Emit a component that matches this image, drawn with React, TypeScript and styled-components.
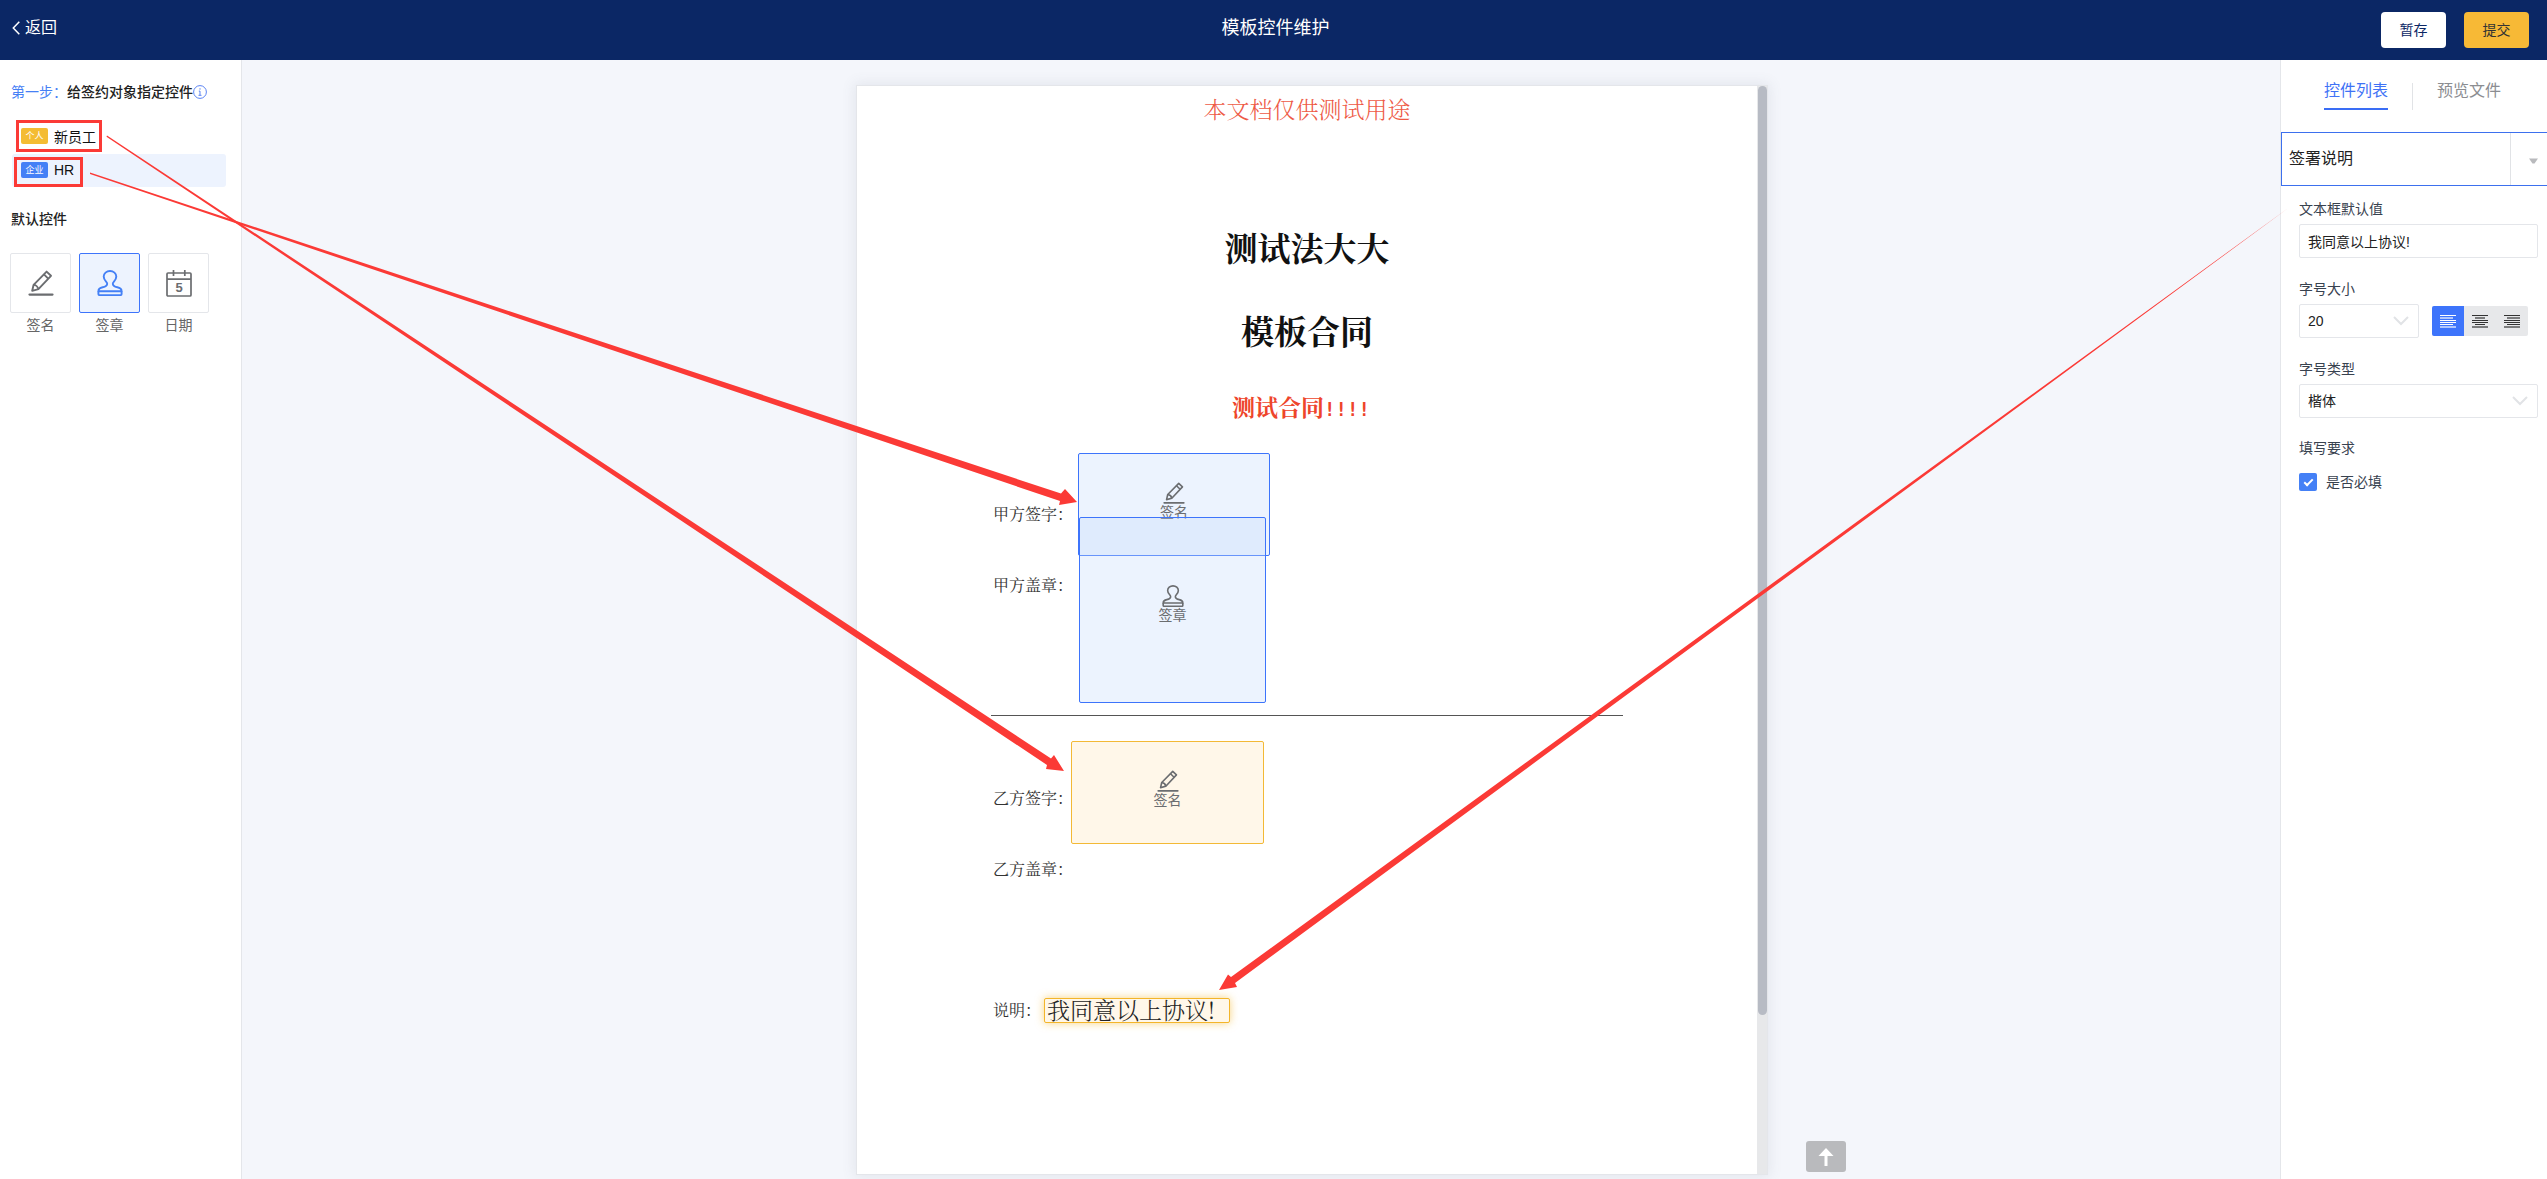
import React, { useState } from "react";
import styled, { createGlobalStyle, css } from "styled-components";

const sans = `"Noto Sans CJK SC", "Liberation Sans", sans-serif`;
const latin = `"Liberation Sans", "Noto Sans CJK SC", sans-serif`;
const serif = `"Noto Serif CJK SC", "Noto Sans CJK SC", serif`;

const GlobalStyle = createGlobalStyle`
  *, *::before, *::after { box-sizing: border-box; }
  body { margin: 0; font-family: ${latin}; font-size: 14px; color: #222; background: #f4f6fb; }
  button, input, select { font: inherit; color: inherit; }
  button { cursor: pointer; }
`;

const App = styled.div`
  position: relative;
  display: flex;
  flex-direction: column;
  height: 100vh;
  overflow: hidden;
`;

/* ---------- header ---------- */
const Header = styled.header`
  flex: none;
  display: grid;
  grid-template-columns: 1fr auto 1fr;
  align-items: center;
  height: 60px;
  padding: 0 18px 0 12px;
  background: #0b2765;
  color: #fff;
`;

const BackLink = styled.a`
  display: flex;
  align-items: center;
  gap: 5px;
  justify-self: start;
  padding-bottom: 4px;
  color: #fff;
  font-size: 16px;
  line-height: 24px;
  text-decoration: none;
`;

const PageTitle = styled.h1`
  margin: 0;
  padding: 0 0 4px 10px;
  font-size: 18px;
  font-weight: 400;
  line-height: 24px;
`;

const HeaderActions = styled.div`
  display: flex;
  justify-content: flex-end;
  gap: 18px;
`;

const ActionButton = styled.button<{ $primary?: boolean }>`
  width: 65px;
  height: 36px;
  padding: 0 0 2px;
  border: 0;
  border-radius: 4px;
  background: ${(p) => (p.$primary ? "#f7b936" : "#fff")};
  color: ${(p) => (p.$primary ? "#333" : "#0b2765")};
`;

/* ---------- body ---------- */
const Body = styled.div`
  flex: 1;
  min-height: 0;
  display: grid;
  grid-template-columns: 242px minmax(0, 1fr) 267px;
`;

const Sidebar = styled.aside`
  padding: 20px 15px 0 11px;
  background: #fff;
  border-right: 1px solid #e4e6ea;
`;

const StepTitle = styled.h2`
  display: flex;
  align-items: center;
  margin: 0 0 16px;
  font-size: 14px;
  font-weight: 500;
  line-height: 24px;
  white-space: nowrap;
  color: #222;
`;

const StepNumber = styled.span`
  font-weight: 400;
  color: #4680f5;
`;

const SignerList = styled.ul`
  display: grid;
  gap: 1px;
  margin: 0;
  padding: 0 0 0 1px;
  list-style: none;
`;

const Signer = styled.button<{ $active?: boolean }>`
  display: flex;
  align-items: center;
  gap: 6px;
  width: 100%;
  height: 33px;
  padding: 0 9px 1px;
  border: 0;
  border-radius: 3px;
  background: ${(p) => (p.$active ? "#edf3fe" : "transparent")};
  color: #111;
`;

const Badge = styled.span<{ $color: string }>`
  width: 27px;
  border-radius: 2px;
  background: ${(p) => p.$color};
  color: #fff;
  font-size: 9px;
  line-height: 16px;
  text-align: center;
`;

const SectionTitle = styled.h2`
  margin: 20px 0 22px;
  font-size: 14px;
  font-weight: 500;
  line-height: 24px;
`;

const Tiles = styled.div`
  display: flex;
  gap: 8px;
  margin-left: -1px;
`;

const Tile = styled.button`
  display: grid;
  justify-items: center;
  width: 61px;
  padding: 0;
  border: 0;
  background: none;
  color: #666;
  line-height: 24px;
`;

const TileIcon = styled.span<{ $active?: boolean }>`
  display: grid;
  place-items: center;
  width: 100%;
  height: 60px;
  border: 1px solid ${(p) => (p.$active ? "#3d74fb" : "#e4e6ea")};
  border-radius: 2px;
  background: ${(p) => (p.$active ? "#edf3fe" : "#fff")};
  color: ${(p) => (p.$active ? "#4480f6" : "#6b6d70")};
`;

/* ---------- document ---------- */
const Workspace = styled.main`
  position: relative;
  display: flex;
  justify-content: center;
  padding: 25px 0 4px 102px;
  min-height: 0;
`;

const Viewer = styled.div`
  display: flex;
  width: 912px;
  border: 1px solid #e4e6ea;
  background: #e7e8ea;
  box-shadow: 0 0 12px 2px rgba(90, 100, 120, 0.1);
`;

const Sheet = styled.article`
  position: relative;
  flex: 1;
  padding: 0 134px;
  background: #fff;
  font-family: ${serif};
  color: #333;
  overflow: hidden;
`;

const ScrollTrack = styled.div`
  width: 10px;
  padding-left: 1px;
`;

const ScrollThumb = styled.div`
  height: 85.4%;
  border-radius: 5px;
  background: #b7bbc4;
`;

const TestNotice = styled.p`
  margin: 0 0 73px;
  font-size: 23px;
  line-height: 46px;
  font-weight: 300;
  text-align: center;
  color: #ee5a46;
`;

const DocTitle = styled.h2`
  margin: 0;
  font-size: 33px;
  font-weight: 700;
  line-height: 83px;
  text-align: center;
  color: #111;
`;

const DocSubtitle = styled.p`
  height: 72px;
  margin: 0 0 35px;
  padding-right: 12px;
  font-size: 23px;
  font-weight: 700;
  line-height: 72px;
  text-align: center;
  color: #ee452b;
`;

const Marks = styled.span`
  font-family: "DejaVu Sans Mono", monospace;
  font-size: 19px;
  line-height: 1;
`;

const DocLine = styled.p`
  margin: 0;
  padding-left: 2px;
  font-size: 16px;
  line-height: 71px;
`;

const DocRule = styled.hr`
  height: 1px;
  margin: 95px 0 46px;
  border: 0;
  background: #555;
`;

const PartyBlock = styled.section<{ $last?: boolean }>`
  ${(p) => p.$last && css`margin-top: 70px;`}
`;

type Box = { x: number; y: number; w: number; h: number; pad: number };

const Control = styled.div<{ $box: Box; $tone: "blue" | "amber" }>`
  position: absolute;
  left: ${(p) => p.$box.x}px;
  top: ${(p) => p.$box.y}px;
  width: ${(p) => p.$box.w}px;
  height: ${(p) => p.$box.h}px;
  display: flex;
  flex-direction: column;
  align-items: center;
  padding-top: ${(p) => p.$box.pad}px;
  border: 1px solid ${(p) => (p.$tone === "blue" ? "#3d74fb" : "#f3b936")};
  border-radius: 2px;
  background: ${(p) => (p.$tone === "blue" ? "rgba(196, 218, 252, 0.32)" : "#fff7e9")};
  font-family: ${sans};
  line-height: 14px;
  color: #6b6d70;
`;

const TextControl = styled.div`
  position: absolute;
  left: 187px;
  top: 912px;
  width: 186px;
  height: 25px;
  padding-left: 2px;
  border: 1px solid #f3b52a;
  border-radius: 2px;
  background: #fff7e9;
  box-shadow: 0 0 8px rgba(243, 181, 42, 0.6);
  font-size: 23px;
  font-weight: 300;
  line-height: 21px;
  white-space: nowrap;
  color: #222;
`;

const BackToTop = styled.button`
  position: absolute;
  left: calc(50% + 545px);
  bottom: 7px;
  display: grid;
  place-items: center;
  width: 40px;
  height: 31px;
  padding: 0;
  border: 0;
  border-radius: 3px;
  background: #b9babd;
`;

/* ---------- right panel ---------- */
const Panel = styled.aside`
  background: #fff;
  border-left: 1px solid #e4e6ea;
`;

const Tabs = styled.nav`
  display: flex;
  align-items: flex-start;
  gap: 24px;
  padding: 19px 0 22px 43px;
`;

const Tab = styled.button<{ $active?: boolean }>`
  height: 31px;
  padding: 0 0 5px;
  border: 0;
  border-bottom: 2px solid ${(p) => (p.$active ? "#3a6df5" : "transparent")};
  background: none;
  font-size: 16px;
  line-height: 24px;
  color: ${(p) => (p.$active ? "#3f72f6" : "#8b8d91")};
`;

const TabDivider = styled.span`
  width: 1px;
  height: 27px;
  margin-top: 4px;
  background: #e1e3e6;
`;

const FieldHeader = styled.div`
  display: flex;
  height: 54px;
  border: 1px solid #3d70ee;
  border-right: 0;
`;

const FieldName = styled.h3`
  flex: 1;
  margin: 0;
  padding-left: 7px;
  font-size: 16px;
  font-weight: 400;
  line-height: 52px;
`;

const FieldToggle = styled.button`
  width: 37px;
  padding: 0 0 0 8px;
  border: 0;
  border-left: 1px solid #e1e3e6;
  background: none;
`;

const Form = styled.form`
  display: grid;
  padding: 8px 9px 0 18px;
`;

const Field = styled.div`
  margin-bottom: 16px;
`;

const Label = styled.label`
  display: block;
  line-height: 30px;
  color: #38424f;
`;

const Caption = styled.div`
  line-height: 28px;
  color: #38424f;
`;

const inputBox = css`
  display: block;
  width: 100%;
  height: 34px;
  padding: 0 8px 1px;
  border: 1px solid #e4e6ea;
  border-radius: 2px;
  background: #fff;
  color: #222;
  appearance: none;
  outline: none;
`;

const TextInput = styled.input`
  ${inputBox}
`;

const SelectWrap = styled.div<{ $short?: boolean }>`
  position: relative;
  ${(p) => p.$short && css`flex: 0 0 120px;`}
`;

const SelectInput = styled.select`
  ${inputBox}
`;

const Chevron = styled.svg`
  position: absolute;
  right: 10px;
  top: 12px;
  pointer-events: none;
`;

const Row = styled.div`
  display: flex;
  align-items: center;
  gap: 13px;
`;

const AlignGroup = styled.div`
  display: flex;
  overflow: hidden;
  border-radius: 2px;
  background: #e7e8ea;
`;

const AlignButton = styled.button<{ $active?: boolean }>`
  display: grid;
  place-items: center;
  width: 32px;
  height: 30px;
  padding: 0;
  border: 0;
  background: ${(p) => (p.$active ? "#3d74fb" : "transparent")};
  color: ${(p) => (p.$active ? "#fff" : "#333")};
`;

const CheckLabel = styled.label`
  display: flex;
  align-items: center;
  gap: 9px;
  margin-top: 8px;
  line-height: 24px;
  color: #38424f;
`;

const Check = styled.input`
  display: grid;
  place-items: center;
  width: 18px;
  height: 18px;
  margin: 0;
  border-radius: 2px;
  appearance: none;
  background: #4480f6;

  &::after {
    content: "";
    width: 9px;
    height: 5px;
    margin-bottom: 2px;
    border: solid #fff;
    border-width: 0 0 2px 2px;
    transform: rotate(-45deg);
  }
  &:not(:checked)::after { display: none; }
`;

/* ---------- annotations ---------- */
const Annotations = styled.svg`
  position: absolute;
  left: 0;
  top: 0;
  width: 100%;
  height: 100%;
  pointer-events: none;
`;

/* ---------- icons ---------- */
const PenIcon = ({ size = 26 }: { size?: number }) => (
  <svg width={size} height={size} viewBox="0 0 26 26" fill="none" stroke="currentColor" strokeWidth="1.9" strokeLinejoin="round" aria-hidden="true">
    <path d="M4.200 20.800 5.600 14.800 18.600 1.600 23 5.800 10.400 19.200Z" />
    <path d="m16 4.400 4.200 4.200M5.600 14.800c2 .2 4.400 2 4.800 4.400" />
    <path d="M1.500 24.600h23" strokeWidth="2.200" strokeLinecap="round" />
  </svg>
);

const StampIcon = ({ size = 26 }: { size?: number }) => (
  <svg width={size} height={size} viewBox="0 0 26 26" fill="none" stroke="currentColor" strokeWidth="1.900" strokeLinejoin="round" aria-hidden="true">
    <path d="M10.200 13.800c.2-2.200-3.500-3.200-3.500-7.300a6.300 5.500 0 0 1 12.600 0c0 4.100-3.700 5.100-3.500 7.300 0 2.400 2 3 4.500 3.500 3.200.6 4.300 1.600 4.300 3.900H1.400c0-2.300 1.100-3.300 4.300-3.900 2.500-.5 4.500-1.100 4.500-3.500Z" />
    <path d="M1.400 21.200v2.900q0 1 1 1h21.200q1 0 1-1v-2.900" />
  </svg>
);

const DateIcon = () => (
  <svg width="26" height="27" viewBox="0 0 26 27" fill="none" stroke="currentColor" strokeWidth="1.700" aria-hidden="true">
    <rect x="1" y="3" width="24" height="23" rx="1" />
    <path d="M1 9.200h24M7.500 0v6M18.800 0v6" />
    <text x="13" y="22" textAnchor="middle" fontFamily="Liberation Sans, sans-serif" fontWeight="700" fontSize="13" fill="currentColor" stroke="none">5</text>
  </svg>
);

const alignAnchor: Record<string, number> = { left: 0, center: 0.5, right: 1 };

const alignRows = [
  { y: 0, h: 1, full: true },
  { y: 2, h: 2, full: false },
  { y: 5, h: 1, full: true },
  { y: 7, h: 1, full: true },
  { y: 9, h: 1, full: false },
  { y: 11, h: 2, full: true },
];

const AlignIcon = ({ kind }: { kind: string }) => (
  <svg width="16" height="13" viewBox="0 0 16 13" fill="currentColor" aria-hidden="true">
    {alignRows.map((row) => {
      const w = row.full ? 16 : kind === "center" ? 10 : 13;
      return <rect key={row.y} x={(16 - w) * alignAnchor[kind]} y={row.y} width={w} height={row.h} opacity={row.h > 1 ? 0.6 : 1} />;
    })}
  </svg>
);

const SelectChevron = () => (
  <Chevron width="16" height="10" viewBox="0 0 16 10" fill="none" stroke="#e1e3e6" strokeWidth="2" aria-hidden="true">
    <path d="m1 1 7 7 7-7" />
  </Chevron>
);

const controls: { kind: "sign" | "stamp"; tone: "blue" | "amber"; box: Box }[] = [
  { kind: "sign", tone: "blue", box: { x: 221, y: 367, w: 192, h: 103, pad: 28 } },
  { kind: "stamp", tone: "blue", box: { x: 222, y: 431, w: 187, h: 186, pad: 67 } },
  { kind: "sign", tone: "amber", box: { x: 214, y: 655, w: 193, h: 103, pad: 28 } },
];

export default function TemplateEditor() {
  const [text, setText] = useState("我同意以上协议!");
  const [align, setAlign] = useState("left");
  const [required, setRequired] = useState(true);

  return (
    <App>
      <GlobalStyle />
      <Header>
        <BackLink href="#back">
          <svg width="8" height="14" viewBox="0 0 8 14" fill="none" stroke="currentColor" strokeWidth="1.500" aria-hidden="true">
            <path d="M7.300.7 1.300 7l6 6.300" />
          </svg>
          返回
        </BackLink>
        <PageTitle>模板控件维护</PageTitle>
        <HeaderActions>
          <ActionButton type="button">暂存</ActionButton>
          <ActionButton type="button" $primary>提交</ActionButton>
        </HeaderActions>
      </Header>

      <Body>
        <Sidebar>
          <StepTitle>
            <StepNumber>第一步：</StepNumber>给签约对象指定控件
            <svg width="14" height="14" viewBox="0 0 14 14" fill="none" stroke="#5b83f3" aria-hidden="true">
              <circle cx="7" cy="7" r="6.400" />
              <path d="M7 3.200v1.500M5.800 6.100H7v4M5.500 10.300h3" />
            </svg>
          </StepTitle>
          <SignerList>
            <li>
              <Signer type="button"><Badge $color="#f4bc33">个人</Badge>新员工</Signer>
            </li>
            <li>
              <Signer type="button" $active><Badge $color="#4480f6">企业</Badge>HR</Signer>
            </li>
          </SignerList>
          <SectionTitle>默认控件</SectionTitle>
          <Tiles>
            <Tile type="button"><TileIcon><PenIcon /></TileIcon>签名</Tile>
            <Tile type="button"><TileIcon $active><StampIcon /></TileIcon>签章</Tile>
            <Tile type="button"><TileIcon><DateIcon /></TileIcon>日期</Tile>
          </Tiles>
        </Sidebar>

        <Workspace>
          <Viewer>
            <Sheet>
              <TestNotice>本文档仅供测试用途</TestNotice>
              <DocTitle>测试法大大</DocTitle>
              <DocTitle>模板合同</DocTitle>
              <DocSubtitle>测试合同<Marks>!!!!</Marks></DocSubtitle>
              <PartyBlock>
                <DocLine>甲方签字：</DocLine>
                <DocLine>甲方盖章：</DocLine>
              </PartyBlock>
              <DocRule />
              <PartyBlock>
                <DocLine>乙方签字：</DocLine>
                <DocLine>乙方盖章：</DocLine>
              </PartyBlock>
              <PartyBlock $last>
                <DocLine>说明：</DocLine>
              </PartyBlock>
              {controls.map((c, i) => (
                <Control key={i} $box={c.box} $tone={c.tone}>
                  {c.kind === "sign" ? <PenIcon size={22} /> : <StampIcon size={22} />}
                  {c.kind === "sign" ? "签名" : "签章"}
                </Control>
              ))}
              <TextControl>{text}</TextControl>
            </Sheet>
            <ScrollTrack><ScrollThumb /></ScrollTrack>
          </Viewer>
          <BackToTop type="button" aria-label="返回顶部">
            <svg width="16" height="20" viewBox="0 0 16 20" fill="#fff" aria-hidden="true">
              <path d="M8 1 15.500 9H9.500v10h-3V9H.5Z" />
            </svg>
          </BackToTop>
        </Workspace>

        <Panel>
          <Tabs>
            <Tab type="button" $active>控件列表</Tab>
            <TabDivider />
            <Tab type="button">预览文件</Tab>
          </Tabs>
          <FieldHeader>
            <FieldName>签署说明</FieldName>
            <FieldToggle type="button" aria-label="收起">
              <svg width="9" height="6" viewBox="0 0 9 6" fill="#b9babd" aria-hidden="true">
                <path d="M0 .5h9L5.500 5.500h-2Z" />
              </svg>
            </FieldToggle>
          </FieldHeader>
          <Form>
            <Field>
              <Label htmlFor="default-text">文本框默认值</Label>
              <TextInput id="default-text" value={text} onChange={(e) => setText(e.target.value)} />
            </Field>
            <Field>
              <Label htmlFor="font-size">字号大小</Label>
              <Row>
                <SelectWrap $short>
                  <SelectInput id="font-size" defaultValue="20">
                    <option>20</option>
                  </SelectInput>
                  <SelectChevron />
                </SelectWrap>
                <AlignGroup>
                  {["left", "center", "right"].map((kind) => (
                    <AlignButton key={kind} type="button" aria-label={kind} $active={align === kind} onClick={() => setAlign(kind)}>
                      <AlignIcon kind={kind} />
                    </AlignButton>
                  ))}
                </AlignGroup>
              </Row>
            </Field>
            <Field>
              <Label htmlFor="font-face">字号类型</Label>
              <SelectWrap>
                <SelectInput id="font-face" defaultValue="楷体">
                  <option>楷体</option>
                </SelectInput>
                <SelectChevron />
              </SelectWrap>
            </Field>
            <Field>
              <Caption>填写要求</Caption>
              <CheckLabel>
                <Check type="checkbox" checked={required} onChange={(e) => setRequired(e.target.checked)} />
                是否必填
              </CheckLabel>
            </Field>
          </Form>
        </Panel>
      </Body>

      <Annotations fill="#fb3a36" aria-hidden="true">
        <rect x="17.500" y="121.500" width="83" height="29" fill="none" stroke="#fb3a36" strokeWidth="3" />
        <rect x="15.500" y="158.500" width="66" height="27" fill="none" stroke="#fb3a36" strokeWidth="3" />
        <path d="M90 172.600 1061 493.500 1065 489 1077 502 1059 505 1060 501 90 174Z" />
        <path d="M107 135.600 1051 758.500 1054 755 1064 771 1046 769 1047 765 106.500 136.800Z" />
        <path d="M2302 198 1231 977 1228 974.500 1219 990 1237 987 1235 983Z" />
      </Annotations>
    </App>
  );
}
